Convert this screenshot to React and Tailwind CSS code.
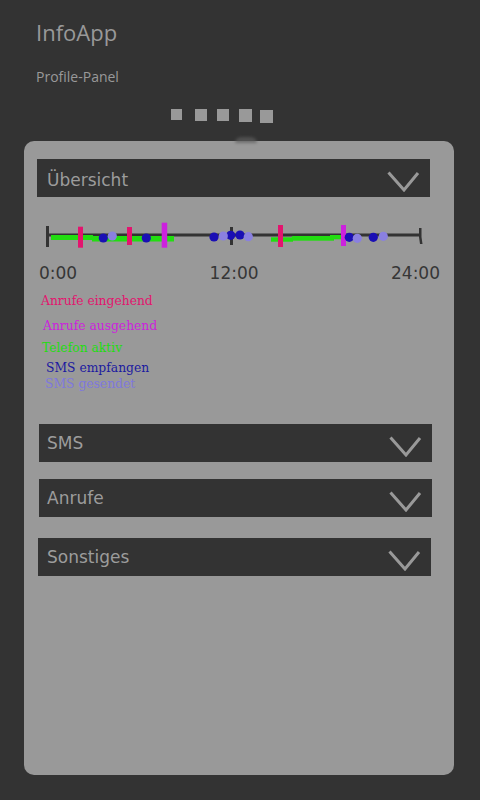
import React from "react";

const legend = [
  { label: "Anrufe eingehend", color: "text-[#e3146e]", cls: "ml-[17px] mt-0" },
  { label: "Anrufe ausgehend", color: "text-[#cc22dd]", cls: "ml-[19px] mt-[9px]" },
  { label: "Telefon aktiv", color: "text-[#22dd11]", cls: "ml-[18px] mt-[6px]" },
  { label: "SMS empfangen", color: "text-[#1c1aa0]", cls: "ml-[22px] mt-[4px]" },
  { label: "SMS gesendet", color: "text-[#7f78dd]", cls: "ml-[21px] mt-0" },
];

function Chevron() {
  return (
    <svg width="33" height="21" viewBox="0 0 33 21" className="shrink-0 mt-[12px]">
      <path d="M1.5 1.5 L17 19 L31 2" fill="none" stroke="#999" strokeWidth="3" />
    </svg>
  );
}

function Section({ title, className, textPad }) {
  return (
    <div className={`flex h-[38px] w-[393px] items-start justify-between bg-[#333] pr-[10px] ${className}`}>
      <span className={`self-center font-['DejaVu_Sans',sans-serif] text-[17px] leading-[20px] text-[#9c9c9c] ${textPad}`}>
        {title}
      </span>
      <Chevron />
    </div>
  );
}

function Timeline() {
  const dark = [
    [79.3, 23], [122.3, 23], [190, 22], [206.7, 20.3], [216, 20], [325.3, 22.3], [349.3, 22.3],
  ];
  const light = [[88.3, 21], [199.3, 21], [224.3, 21.7], [333.3, 23.3], [359.3, 21.3]];
  return (
    <svg width="430" height="40" viewBox="0 0 430 40" className="mt-[18px] block">
      <rect x="22" y="18.5" width="374" height="3" fill="#333" />
      {/* telefon aktiv */}
      <rect x="27" y="20" width="42" height="5" fill="#22dd11" />
      <rect x="68" y="21" width="82" height="5.5" fill="#22dd11" />
      <rect x="247" y="22.3" width="22" height="4.4" fill="#22dd11" />
      <rect x="268" y="21" width="42" height="4.7" fill="#22dd11" />
      <rect x="306" y="20" width="15" height="4.3" fill="#22dd11" />
      {/* ticks */}
      <rect x="22" y="11" width="3" height="21" fill="#333" />
      <rect x="206" y="12" width="3" height="18" fill="#333" />
      <path d="M395 13 L397.5 13 L397.5 22 L398.5 29 L396 29 L395 22 Z" fill="#333" />
      {/* anrufe */}
      <rect x="54" y="11.7" width="5" height="21" fill="#e3146e" />
      <rect x="103" y="12" width="5" height="18" fill="#e3146e" />
      <rect x="254" y="10" width="5" height="22" fill="#e3146e" />
      <rect x="137.7" y="7.7" width="5.5" height="25" fill="#cc22dd" />
      <rect x="317" y="10" width="5" height="21" fill="#cc22dd" />
      {/* sms */}
      {dark.map(([cx, cy], i) => (
        <circle key={"d" + i} cx={cx} cy={cy} r="4.6" fill="#1a0fb4" />
      ))}
      {light.map(([cx, cy], i) => (
        <circle key={"l" + i} cx={cx} cy={cy} r="4.6" fill="#8a80e0" />
      ))}
    </svg>
  );
}

export default function App() {
  return (
    <div className="min-h-[800px] w-full bg-[#333] pb-[25px]">
      <div className="pl-[36px] pt-[17px]">
        <h1 className="font-['Open_Sans',sans-serif] text-[22px] leading-[30px] text-[#999]">InfoApp</h1>
        <p className="mt-[20px] font-['Open_Sans',sans-serif] text-[14px] leading-[20px] text-[#999]">
          Profile-Panel
        </p>
      </div>

      {/* page dots */}
      <div className="mt-[22px] flex items-start pl-[171px]">
        <div className="h-[11px] w-[11px] bg-[#999]" />
        <div className="ml-[13px] h-[12px] w-[12px] bg-[#999]" />
        <div className="ml-[10px] h-[12px] w-[12px] bg-[#999]" />
        <div className="ml-[10px] h-[13px] w-[13px] bg-[#999]" />
        <div className="ml-[8px] mt-px h-[13px] w-[13px] bg-[#999]" />
      </div>

      {/* panel */}
      <div className="relative ml-[24px] mt-[18px] h-[634px] w-[430px] rounded-[10px] bg-[#999]">
        <div className="absolute -top-[4px] left-[211px] h-[6px] w-[22px] rounded-t-full bg-[#5c5c5c] opacity-70 blur-[1.5px]" />

        <div className="pt-[18px]">
          <Section title="Übersicht" className="ml-[13px]" textPad="pl-[10px] pt-[3px]" />
        </div>

        <Timeline />

        <div className="mt-[8px] flex justify-between pl-[15px] pr-[14px] font-['DejaVu_Sans',sans-serif] text-[17px] leading-[20px] text-[#363636]">
          <span>0:00</span>
          <span>12:00</span>
          <span>24:00</span>
        </div>

        <div className="mt-[9px] flex flex-col items-start font-['DejaVu_Serif_Condensed','DejaVu_Serif',serif] text-[13.7px] leading-[16px]">
          {legend.map((l) => (
            <span key={l.label} className={`${l.color} ${l.cls}`}>
              {l.label}
            </span>
          ))}
        </div>

        <Section title="SMS" className="ml-[15px] mt-[33px]" textPad="pl-[8px]" />
        <Section title="Anrufe" className="ml-[15px] mt-[17px]" textPad="pl-[8px]" />
        <Section title="Sonstiges" className="ml-[14px] mt-[21px]" textPad="pl-[9px]" />
      </div>
    </div>
  );
}
